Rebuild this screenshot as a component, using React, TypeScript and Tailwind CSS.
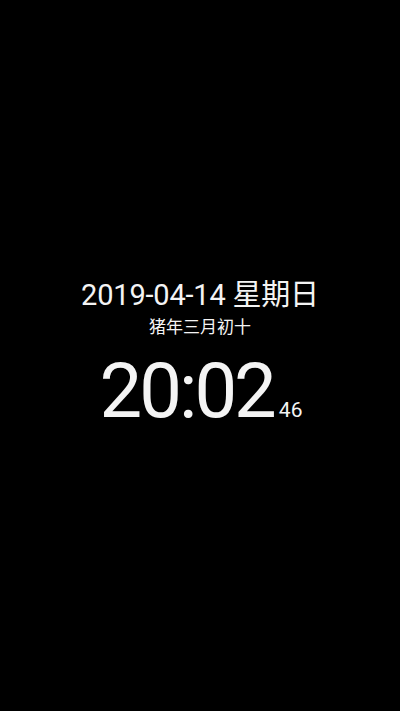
import React from 'react';

const App: React.FC = () => {
  return (
    <div
      className="w-[400px] h-[711px] bg-black text-[#f4f4f4] flex flex-col items-center"
      style={{ fontFamily: 'Roboto, "Noto Sans CJK SC", sans-serif' }}
    >
      <div className="pt-[276px] flex flex-col items-center">
        <div className="text-[29px] leading-[38px] tracking-[-0.2px]">2019-04-14 星期日</div>
        <div className="text-[17px] leading-[22px] mt-[2px]">猪年三月初十</div>
        <div className="flex items-baseline mt-[9px] pl-[2px]">
          <span className="text-[76px] leading-[88px] tracking-[-3px]">20:02</span>
          <span className="text-[21px] ml-[5px]">46</span>
        </div>
      </div>
    </div>
  );
};

export default App;
